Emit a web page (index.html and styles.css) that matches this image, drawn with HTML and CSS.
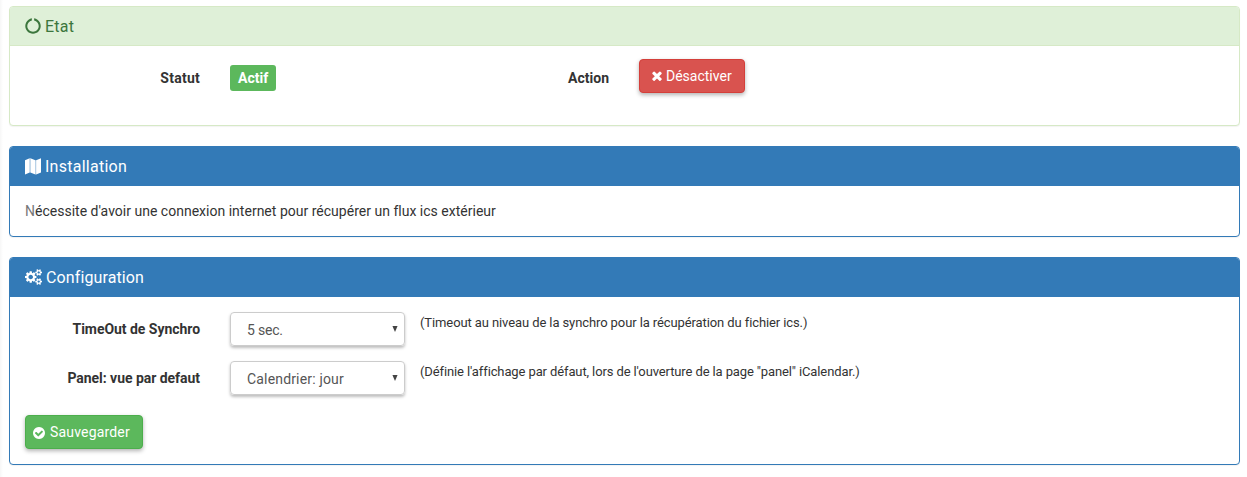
FILE: index.html
```html
<!DOCTYPE html>
<html lang="fr">
<head>
<meta charset="utf-8">
<title>Configuration du plugin</title>
<link rel="stylesheet" href="styles.css">
</head>
<body>
<main class="page">
  <section class="panel panel-success">
    <h3 class="panel-heading"><svg class="icon icon-notch" viewBox="0 0 1792 1792"><path d="M1760 896q0 176-68.5 336t-184 275.5-275.5 184-336 68.5-336-68.5-275.5-184-184-275.5-68.5-336q0-213 97-398.5t265-305.5 374-151v228q-221 45-366.5 221t-145.5 406q0 130 51 248.5t136.5 204 204 136.5 248.5 51 248.5-51 204-136.5 136.5-204 51-248.5q0-230-145.5-406t-366.5-221v-228q206 31 374 151t265 305.5 97 398.5z"/></svg><span>Etat</span></h3>
    <div class="state-body">
      <span class="label">Statut</span>
      <span class="badge">Actif</span>
      <span class="label label-action">Action</span>
      <button class="btn btn-danger"><svg class="icon icon-times" viewBox="302 302 1188 1252"><path d="M1490 1322q0 40-28 68l-136 136q-28 28-68 28t-68-28l-294-294-294 294q-28 28-68 28t-68-28l-136-136q-28-28-28-68t28-68l294-294-294-294q-28-28-28-68t28-68l136-136q28-28 68-28t68 28l294 294 294-294q28-28 68-28t68 28l136 136q28 28 28 68t-28 68l-294 294 294 294q28 28 28 68z"/></svg><span>Désactiver</span></button>
    </div>
  </section>

  <section class="panel panel-primary">
    <h3 class="panel-heading"><svg class="icon icon-map" viewBox="0 0 16 17"><path d="M0 2.2 4.7.2v14.200L0 16.600z"/><path d="M5.400.2 10.400 2.300v14.300L5.400 14.400z"/><path d="M11.100 2.300 16 .2v14.300l-4.900 2.100z"/><path class="fold" d="M4.700.2h.7v14.200h-.7zM10.400 2.300h.7v14.300h-.7z"/></svg><span>Installation</span></h3>
    <div class="panel-body intro"><span class="initial">N</span>écessite d'avoir une connexion internet pour récupérer un flux ics extérieur</div>
  </section>

  <section class="panel panel-primary">
    <h3 class="panel-heading heading-config"><svg class="icon icon-cogs" viewBox="-64 0 1920 1792"><path d="M832 896q0-106-75-181t-181-75-181 75-75 181 75 181 181 75 181-75 75-181zm768 512q0-52-38-90t-90-38-90 38-38 90q0 53 37.500 90.500t90.500 37.500 90.500-37.500 37.500-90.500zm0-1024q0-52-38-90t-90-38-90 38-38 90q0 53 37.500 90.500t90.500 37.500 90.500-37.500 37.500-90.500zm-384 421v185q0 10-7 19.500t-16 10.500l-155 24q-11 35-32 76 34 48 90 115 7 11 7 20 0 12-7 19-23 30-82.500 89.500t-78.500 59.500q-11 0-21-7l-115-90q-37 19-77 31-11 108-23 155-7 24-30 24h-186q-11 0-20-7.500t-10-17.500l-23-153q-34-10-75-31l-118 89q-7 7-20 7-11 0-21-8-144-133-144-160 0-9 7-19 10-14 41-53t47-61q-23-44-35-82l-152-24q-10-1-17-9.500t-7-19.500v-185q0-10 7-19.500t16-10.500l155-24q11-35 32-76-34-48-90-115-7-11-7-20 0-12 7-20 22-30 82-89t79-59q11 0 21 7l115 90q34-18 77-32 11-108 23-154 7-24 30-24h186q11 0 20 7.500t10 17.500l23 153q34 10 75 31l118-89q8-7 20-7 11 0 21 8 144 133 144 160 0 9-7 19-12 16-42 54t-45 60q23 48 34 82l152 23q10 2 17 10.500t7 19.500zM1856 1338v140q0 16-149 31-12 27-30 52 51 113 51 138 0 4-4 7-122 71-124 71-8 0-46-47t-52-68q-20 2-30 2t-30-2q-14 21-52 68t-46 47q-2 0-124-71-4-3-4-7 0-25 51-138-18-25-30-52-149-15-149-31v-140q0-16 149-31 13-29 30-52-51-113-51-138 0-4 4-7 4-2 35-20t59-34 30-16q8 0 46 46.500t52 67.500q20-2 30-2t30 2q51-71 92-112l6-2q4 0 124 70 4 3 4 7 0 25-51 138 17 23 30 52 149 15 149 31zM1856 314v140q0 16-149 31-12 27-30 52 51 113 51 138 0 4-4 7-122 71-124 71-8 0-46-47t-52-68q-20 2-30 2t-30-2q-14 21-52 68t-46 47q-2 0-124-71-4-3-4-7 0-25 51-138-18-25-30-52-149-15-149-31v-140q0-16 149-31 13-29 30-52-51-113-51-138 0-4 4-7 4-2 35-20t59-34 30-16q8 0 46 46.500t52 67.500q20-2 30-2t30 2q51-71 92-112l6-2q4 0 124 70 4 3 4 7 0 25-51 138 17 23 30 52 149 15 149 31z" fill-rule="evenodd"/></svg><span>Configuration</span></h3>
    <form class="panel-body">
      <div class="form-row">
        <span class="label">TimeOut de Synchro</span>
        <div class="select"><span class="value-time">5 sec.</span><svg class="arrow" viewBox="0 0 6 7"><path d="M0 0h6L3 7z"/></svg></div>
        <span class="help">(Timeout au niveau de la synchro pour la récupération du fichier ics.)</span>
      </div>
      <div class="form-row">
        <span class="label">Panel: vue par defaut</span>
        <div class="select"><span class="value-view">Calendrier: jour</span><svg class="arrow" viewBox="0 0 6 7"><path d="M0 0h6L3 7z"/></svg></div>
        <span class="help help-view">(Définie l'affichage par défaut, lors de l'ouverture de la page "panel" iCalendar.)</span>
      </div>
      <button class="btn btn-success" type="button"><svg class="icon icon-check" viewBox="128 128 1536 1536"><path d="M1412 734q0-28-18-46l-91-90q-19-19-45-19t-45 19l-408 407-226-226q-19-19-45-19t-45 19l-91 90q-18 18-18 46 0 27 18 45l362 362q19 19 45 19 27 0 46-19l543-543q18-18 18-45zm252 162q0 209-103 385.500t-279.500 279.500-385.500 103-385.500-103-279.500-279.500-103-385.500 103-385.500 279.500-279.500 385.500-103 385.500 103 279.500 279.500 103 385.500z"/></svg><span>Sauvegarder</span></button>
    </form>
  </section>
</main>
</body>
</html>
```

FILE: styles.css
```css
* {
  box-sizing: border-box;
}

body {
  margin: 0;
  background: linear-gradient(to right, #f7f7f7, #fff 3px);
  color: #333;
  font: 14px/20px Roboto, sans-serif;
  height: 477px;
  overflow: hidden;
}

.page {
  display: flex;
  flex-direction: column;
  gap: 20px;
  padding: 6px 7px 0 9px;
}

.panel {
  background: #fff;
  border: 1px solid #337ab7;
  border-radius: 4px;
  box-shadow: 0 1px 1px rgba(0, 0, 0, .05);
}

.panel-success {
  height: 120px;
  border-color: #d6e9c6;
}

.panel-heading {
  display: flex;
  align-items: center;
  height: 39px;
  margin: 0;
  padding: 0 15px;
  background: #337ab7;
  border-radius: 3px 3px 0 0;
  color: #fff;
  font-size: 16px;
  font-weight: 400;
  letter-spacing: .26px;
}

.heading-config {
  letter-spacing: .12px;
}

.panel-success .panel-heading {
  padding-top: 1px;
  background: #dff0d8;
  border-bottom: 1px solid #d6e9c6;
  color: #3c763d;
}

.icon {
  flex: none;
  fill: currentColor;
}

.icon-notch {
  width: 16px;
  height: 16px;
  margin: 0 4px 1px 0;
}

.icon-map {
  width: 16px;
  height: 17px;
  margin-right: 4px;
}

.fold {
  opacity: .7;
}

.icon-cogs {
  width: 17.14px;
  height: 16px;
  margin: 0 3.86px 1px 0;
}

.icon-times {
  width: 10px;
  height: 10px;
  margin-right: 4px;
}

.icon-check {
  width: 12px;
  height: 12px;
  margin: 1px 5px 0 0;
}

.state-body {
  display: grid;
  grid-template-columns: 190px 190px 159px 1fr;
  column-gap: 30px;
  padding-top: 13px;
  align-items: start;
}

.label {
  font-weight: 700;
  text-align: right;
  letter-spacing: -.04px;
}

.state-body .label {
  margin-top: 9px;
  letter-spacing: .25px;
}

.state-body .label-action {
  letter-spacing: 0;
}

.badge {
  justify-self: start;
  height: 26px;
  margin-top: 6px;
  padding: 0 8px;
  border-radius: 3px;
  background: #5cb85c;
  color: #fff;
  font-weight: 700;
  line-height: 26px;
}

.btn {
  display: flex;
  align-items: center;
  height: 34px;
  border: 1px solid;
  border-radius: 4px;
  box-shadow: 0 2px 4px rgba(0, 0, 0, .3);
  color: #fff;
  font: 14px/20px Roboto, sans-serif;
}

.btn-danger {
  justify-self: start;
  padding: 0 12px;
  background: #d9534f;
  border-color: #d43f3a;
}

.btn-success {
  width: 118px;
  margin-top: 20px;
  padding: 0 7px;
  background: #5cb85c;
  border-color: #4cae4c;
  letter-spacing: .18px;
}

.panel-body {
  margin: 0;
  padding: 15px;
}

.intro {
  letter-spacing: .01px;
}

.initial {
  color: #777;
}

.form-row {
  display: grid;
  grid-template-columns: 175px 175px 1fr;
  column-gap: 30px;
  height: 34px;
  margin-bottom: 15px;
}

.form-row .label {
  margin-top: 7px;
}

.select {
  display: flex;
  align-items: center;
  justify-content: space-between;
  height: 34px;
  padding: 2px 6px 0 16px;
  border: 1px solid #ccc;
  border-radius: 4px;
  box-shadow: 0 2px 3px rgba(0, 0, 0, .26);
  color: #555;
}

.value-time {
  letter-spacing: -.2px;
}

.value-view {
  letter-spacing: .17px;
}

.arrow {
  width: 6px;
  height: 6px;
  margin-top: -3px;
  fill: #444;
}

.help {
  margin: 1px 0 0 -15px;
  font-size: 13px;
  letter-spacing: -.1px;
  white-space: nowrap;
}

.help-view {
  letter-spacing: -.115px;
}
```
